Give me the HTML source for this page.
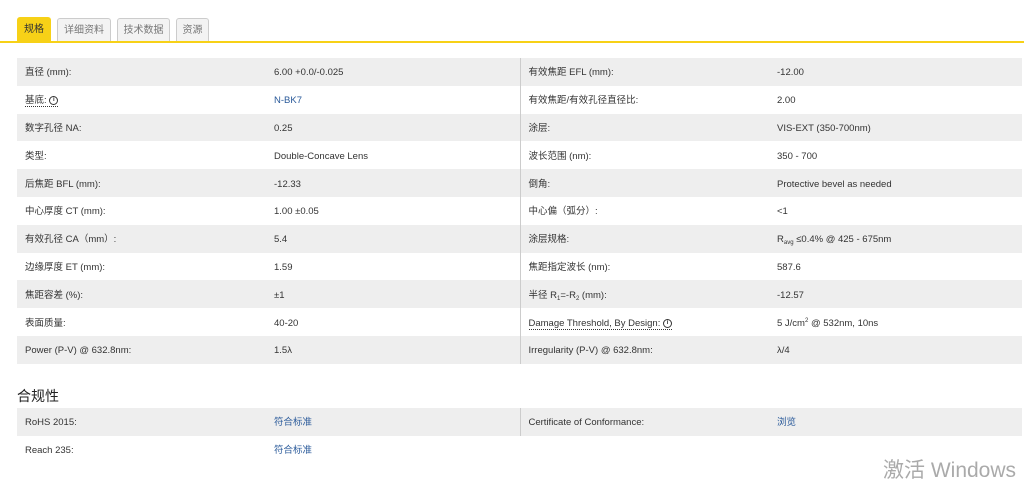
<!DOCTYPE html>
<html><head><meta charset="utf-8"><style>
*{margin:0;padding:0;box-sizing:border-box}
body{width:1024px;height:482px;background:#fff;font-family:"Liberation Sans","Noto Sans CJK SC",sans-serif;font-size:9.5px;color:#333;position:relative;overflow:hidden}
.tabs{position:absolute;top:17px;left:17px;height:25px}
.tab{position:absolute;top:1px;height:24px;border:1px solid #ccc;border-bottom:none;background:#f3f3f3;border-radius:3px 3px 0 0;color:#777;font-size:10px;line-height:23px;text-align:center}
.tab.on{background:#f7d117;border-color:#f7d117;color:#333;top:0;height:25px}
.line{position:absolute;top:41px;left:0;width:1024px;height:2px;background:#f7d117}
table{position:absolute;left:17px;width:1005px;border-collapse:collapse;table-layout:fixed}
td{height:27.8px;padding:3px 0 0 0;vertical-align:middle;line-height:12px;white-space:nowrap}
tr:nth-child(odd) td{background:#eee}
.l{color:#2a5a9a}
.u{border-bottom:1px dotted #333}
.i{display:inline-block;width:9px;height:9px;border:1.3px solid #333;border-radius:50%;font-size:6px;line-height:6px;text-align:center;font-weight:bold;vertical-align:middle}
h3{position:absolute;left:17px;top:386px;font-size:14px;font-weight:normal;color:#222}
.wm{position:absolute;left:883px;top:454px;font-size:21px;color:#aaa}
sub,sup{font-size:6px;line-height:0;position:relative;vertical-align:baseline}
sub{top:2px}sup{top:-4px}
</style></head><body>
<div class="tabs">
<div class="tab on" style="left:0;width:34px">规格</div>
<div class="tab" style="left:40px;width:54px">详细资料</div>
<div class="tab" style="left:100px;width:53px">技术数据</div>
<div class="tab" style="left:159px;width:33px">资源</div>
</div>
<div class="line"></div>
<table style="top:58px">
<colgroup><col style="width:257px"><col style="width:246px"><col style="width:257px"><col style="width:245px"></colgroup>
<tr><td style="padding-left:8px">直径 (mm):</td><td style="border-right:1px solid #ccc">6.00 +0.0/-0.025</td><td style="padding-left:8px">有效焦距 EFL (mm):</td><td>-12.00</td></tr>
<tr><td style="padding-left:8px"><span class="u">基底: <span class="i">i</span></span></td><td class="l" style="border-right:1px solid #ccc">N-BK7</td><td style="padding-left:8px">有效焦距/有效孔径直径比:</td><td>2.00</td></tr>
<tr><td style="padding-left:8px">数字孔径 NA:</td><td style="border-right:1px solid #ccc">0.25</td><td style="padding-left:8px">涂层:</td><td>VIS-EXT (350-700nm)</td></tr>
<tr><td style="padding-left:8px">类型:</td><td style="border-right:1px solid #ccc">Double-Concave Lens</td><td style="padding-left:8px">波长范围 (nm):</td><td>350 - 700</td></tr>
<tr><td style="padding-left:8px">后焦距 BFL (mm):</td><td style="border-right:1px solid #ccc">-12.33</td><td style="padding-left:8px">倒角:</td><td>Protective bevel as needed</td></tr>
<tr><td style="padding-left:8px">中心厚度 CT (mm):</td><td style="border-right:1px solid #ccc">1.00 ±0.05</td><td style="padding-left:8px">中心偏（弧分）:</td><td>&lt;1</td></tr>
<tr><td style="padding-left:8px">有效孔径 CA（mm）:</td><td style="border-right:1px solid #ccc">5.4</td><td style="padding-left:8px">涂层规格:</td><td>R<sub>avg</sub> ≤0.4% @ 425 - 675nm</td></tr>
<tr><td style="padding-left:8px">边缘厚度 ET (mm):</td><td style="border-right:1px solid #ccc">1.59</td><td style="padding-left:8px">焦距指定波长 (nm):</td><td>587.6</td></tr>
<tr><td style="padding-left:8px">焦距容差 (%):</td><td style="border-right:1px solid #ccc">±1</td><td style="padding-left:8px">半径 R<sub>1</sub>=-R<sub>2</sub> (mm):</td><td>-12.57</td></tr>
<tr><td style="padding-left:8px">表面质量:</td><td style="border-right:1px solid #ccc">40-20</td><td style="padding-left:8px"><span class="u">Damage Threshold, By Design: <span class="i">i</span></span></td><td>5 J/cm<sup>2</sup> @ 532nm, 10ns</td></tr>
<tr><td style="padding-left:8px">Power (P-V) @ 632.8nm:</td><td style="border-right:1px solid #ccc">1.5λ</td><td style="padding-left:8px">Irregularity (P-V) @ 632.8nm:</td><td>λ/4</td></tr>
</table>
<h3>合规性</h3>
<table style="top:408px">
<colgroup><col style="width:257px"><col style="width:246px"><col style="width:257px"><col style="width:245px"></colgroup>
<tr><td style="padding-left:8px">RoHS 2015:</td><td class="l" style="border-right:1px solid #ccc">符合标准</td><td style="padding-left:8px">Certificate of Conformance:</td><td class="l">浏览</td></tr>
<tr><td style="padding-left:8px">Reach 235:</td><td class="l">符合标准</td><td></td><td></td></tr>
</table>
<div class="wm">激活 Windows</div>
</body></html>
